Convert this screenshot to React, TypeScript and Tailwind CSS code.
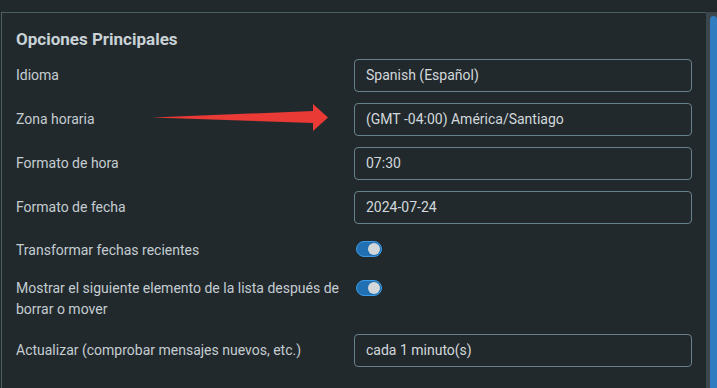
import React from 'react';

const label = 'w-[338px] shrink-0 text-[14px] text-[#c4cdd1]';
const field =
  'flex h-[33px] w-[338px] items-center rounded-[4px] border border-[#67818c] px-[11px] text-[14px] text-[#d2d8db]';

function Toggle() {
  return (
    <div className="flex h-[16px] w-[26px] items-center justify-end rounded-full border border-[#3b9be6] bg-[#2170b3] pr-[1px]">
      <div className="h-[12px] w-[12px] rounded-full bg-[#d2d7da]" />
    </div>
  );
}

function InputRow({ name, value, className }: { name: string; value: string; className: string }) {
  return (
    <div className={`flex items-center ${className}`}>
      <div className={label}>{name}</div>
      <div className={field}>{value}</div>
    </div>
  );
}

export default function App() {
  return (
    <div
      className="relative flex h-[388px] w-[717px] flex-col overflow-hidden bg-[#22292d]"
      style={{ fontFamily: 'Roboto, "Liberation Sans", sans-serif' }}
    >
      <div className="h-[12px] shrink-0" />
      <div className="flex flex-1">
        <div className="ml-[1px] flex-1 border-l border-t border-[#4c5e64] pl-[14px] pt-[14px]">
          <h2 className="text-[17px] font-bold leading-6 text-[#c9d2d6]">Opciones Principales</h2>

          <InputRow name="Idioma" value="Spanish (Español)" className="mt-[8px]" />
          <InputRow name="Zona horaria" value="(GMT -04:00) América/Santiago" className="mt-[11px]" />
          <InputRow name="Formato de hora" value="07:30" className="mt-[11px]" />
          <InputRow name="Formato de fecha" value="2024-07-24" className="mt-[11px]" />

          <div className="mt-[11px] flex h-[28px] items-center">
            <div className={`${label} pt-[3px]`}>Transformar fechas recientes</div>
            <div className="pl-[2px]">
              <Toggle />
            </div>
          </div>

          <div className="mt-[15px] flex items-start">
            <div className={`${label} pr-[10px] leading-[21px]`}>
              Mostrar el siguiente elemento de la lista después de borrar o mover
            </div>
            <div className="pl-[2px] pt-[2px]">
              <Toggle />
            </div>
          </div>

          <InputRow name="Actualizar (comprobar mensajes nuevos, etc.)" value="cada 1 minuto(s)" className="mt-[14px]" />
        </div>

        {/* scrollbar */}
        <div className="flex w-[11px] shrink-0 justify-end bg-[#3b474c]">
          <div className="mt-[4px] w-[7px] rounded-t-full bg-[#2f7cc0]" />
        </div>
      </div>

      {/* annotation arrow */}
      <svg className="absolute left-0 top-0" width="717" height="388" viewBox="0 0 717 388">
        <polygon points="152,117.5 313,111 313,104 328,117.5 313,131 313,123" fill="#e93a36" />
      </svg>
    </div>
  );
}
